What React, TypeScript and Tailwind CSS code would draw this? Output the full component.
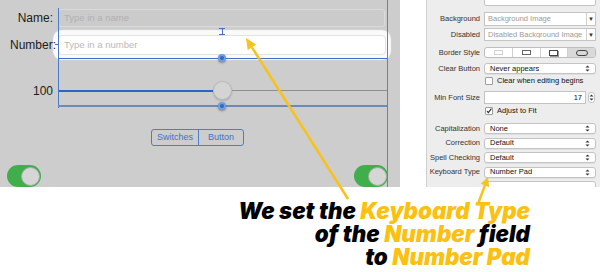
import React from 'react';

const Handle: React.FC<{ className: string }> = ({ className }) => (
  <div
    className={`absolute w-[8px] h-[8px] rounded-full bg-[#2f69c7] border-[2px] border-[#6f9ee0] shadow-[0_1px_2px_rgba(0,0,0,0.35)] ${className}`}
  />
);

const Switch: React.FC = () => (
  <div className="w-[34px] h-[22px] rounded-full bg-[#3fae4b] flex items-center justify-end pr-[1px]">
    <div className="w-[19px] h-[19px] rounded-full bg-[#d6d6d6] border border-[#a9a9a9]" />
  </div>
);

const Canvas: React.FC = () => (
  <div className="relative w-[400px] h-[187px] bg-[#cdcdcd] overflow-hidden flex flex-col pt-[9px] text-[#1b1b1b]">
    {/* Name */}
    <div className="flex items-center h-[18px]">
      <span className="w-[53px] text-right text-[12px] leading-none">Name:</span>
      <div className="ml-[5px] w-[327px] h-[18px] rounded-[3px] border border-[#dbdbdb] bg-[#cbcbcb] flex items-center px-[5px] text-[9.5px] text-[#b1b1b1]">
        Type in a name
      </div>
    </div>

    {/* Number */}
    <div className="mt-[8px] flex items-center h-[20px]">
      <span className="relative z-10 w-[56px] text-right text-[12px] leading-none">Number:</span>
      <div className="ml-[2px] w-[328px] h-[20px] rounded-[4px] bg-white border border-[#e2e2e2] shadow-[0_0_1px_5px_#fafafa] flex items-center px-[5px] text-[9.5px] text-[#b9b9b9]">
        Type in a number
      </div>
    </div>

    {/* Slider */}
    <div className="mt-[26px] flex items-center h-[19px]">
      <span className="w-[53px] text-right text-[12px] leading-none">100</span>
      <div className="ml-[5px] w-[329px] flex items-center">
        <div className="w-[155px] h-[2px] bg-[#2a64c7]" />
        <div className="w-[19px] h-[19px] rounded-full bg-[#d4d4d4] border border-[#bcbcbc] shadow-[0_1px_2px_rgba(0,0,0,0.2)]" />
        <div className="flex-1 h-[1px] bg-[#8f8f8f]" />
      </div>
    </div>

    {/* Segmented */}
    <div className="mt-[29px] ml-[151px] w-[93px] h-[19px] flex rounded-[3px] border border-[#4a7ed0] text-[9px] text-[#3a73c9]">
      <div className="w-[47px] flex items-center justify-center border-r border-[#4a7ed0]">Switches</div>
      <div className="flex-1 flex items-center justify-center">Button</div>
    </div>

    {/* Switches */}
    <div className="mt-[19px] flex pl-[7px] pr-[12px]">
      <Switch />
      <div className="ml-auto">
        <Switch />
      </div>
    </div>

    {/* layout guides */}
    <div className="absolute left-[58px] top-[8px] h-[100px] w-px bg-[#4a7ccb]" />
    <div className="absolute left-[387px] top-0 h-[187px] w-px bg-[#5a84c4]" />
    <div className="absolute left-[58px] top-[58px] w-[329px] h-px bg-[#3f72c6]" />
    <div className="absolute left-[58px] top-[105px] w-[329px] h-[2px] bg-[#6c8cb8]" />
    <div className="absolute left-[55px] top-[44px] w-[4px] h-px bg-[#3f72c6]" />
    <Handle className="left-[218px] top-[54px]" />
    <Handle className="left-[218px] top-[102px]" />
    <div className="absolute left-[219px] top-[28px] w-[6px] h-[7px] flex flex-col items-center">
      <div className="w-[6px] h-px bg-[#3f72c6]" />
      <div className="w-px flex-1 bg-[#3f72c6]" />
      <div className="w-[6px] h-px bg-[#3f72c6]" />
    </div>
  </div>
);

const Updown: React.FC = () => (
  <svg width="5" height="7" viewBox="0 0 5 7" className="shrink-0">
    <path d="M2.5 0.5L4.5 2.6H0.5Z M2.5 6.5L4.5 4.4H0.5Z" fill="#333" />
  </svg>
);

const Label: React.FC<{ children?: React.ReactNode }> = ({ children }) => (
  <span className="w-[55px] shrink-0 text-right pr-[2px] text-[#333] whitespace-nowrap">{children}</span>
);

const Popup: React.FC<{ value: string; h?: string }> = ({ value, h = 'h-[11px]' }) => (
  <div
    className={`ml-[2px] w-[112px] ${h} rounded-[3px] bg-white border border-[#c4c4c4] shadow-[0_1px_0_rgba(0,0,0,0.06)] flex items-center justify-between px-[5px] text-[#111]`}
  >
    <span>{value}</span>
    <Updown />
  </div>
);

const TextPopup: React.FC<{ value: string; h: string }> = ({ value, h }) => (
  <div className={`ml-[2px] w-[112px] ${h} bg-white border border-[#c4c4c4] flex items-center text-[#9a9a9a]`}>
    <span className="flex-1 pl-[3px] overflow-hidden whitespace-nowrap">{value}</span>
    <span className="w-[9px] h-full border-l border-[#d0d0d0] flex items-center justify-center text-[#333] text-[6px]">▼</span>
  </div>
);

const Check: React.FC<{ checked?: boolean; text: string }> = ({ checked, text }) => (
  <div className="flex items-center h-[10px]">
    <Label />
    <div className="ml-[3px] w-[8px] h-[8px] rounded-[1px] bg-white border border-[#9d9d9d] flex items-center justify-center">
      {checked && (
        <svg width="8" height="8" viewBox="0 0 8 8">
          <path d="M1.3 4.2L3.1 6.2L7.2 0.8" stroke="#222" strokeWidth="1.4" fill="none" />
        </svg>
      )}
    </div>
    <span className="ml-[4px] text-[#111]">{text}</span>
  </div>
);

const Sep: React.FC<{ className: string }> = ({ className }) => <div className={`h-px bg-[#d3d3d3] ${className}`} />;

const Inspector: React.FC = () => (
  <div className="w-[174px] h-[187px] bg-[#ededed] border-l border-[#cfcfcf] flex flex-col text-[7.5px] leading-none overflow-hidden">
    <div className="-mt-[8px] flex items-center h-[14px]">
      <Label />
      <div className="ml-[2px] w-[112px] h-[14px] bg-white border border-[#c4c4c4] rounded-[2px]" />
    </div>
    <div className="mt-[6px] flex items-center">
      <Label>Background</Label>
      <TextPopup value="Background Image" h="h-[14px]" />
    </div>
    <div className="mt-[2px] flex items-center">
      <Label>Disabled</Label>
      <TextPopup value="Disabled Background Image" h="h-[13px]" />
    </div>
    <Sep className="mt-[3px]" />
    <div className="mt-[3px] flex items-center">
      <Label>Border Style</Label>
      <div className="ml-[2px] w-[112px] h-[11px] flex rounded-[3px] border border-[#bdbdbd] bg-white overflow-hidden">
        <div className="flex-1 flex items-center justify-center border-r border-[#cfcfcf]">
          <div className="w-[9px] h-[5px] border border-[#cfcfcf]" />
        </div>
        <div className="flex-1 flex items-center justify-center border-r border-[#cfcfcf]">
          <div className="w-[9px] h-[5px] border border-[#666]" />
        </div>
        <div className="flex-1 flex items-center justify-center border-r border-[#cfcfcf]">
          <div className="w-[9px] h-[6px] border border-[#444] shadow-[1px_1px_0_#999]" />
        </div>
        <div className="flex-1 flex items-center justify-center bg-[#d9d9d9]">
          <div className="w-[12px] h-[6px] rounded-[3px] border border-[#444]" />
        </div>
      </div>
    </div>
    <Sep className="mt-[3px]" />
    <div className="mt-[2px] flex items-center">
      <Label>Clear Button</Label>
      <Popup value="Never appears" />
    </div>
    <div className="mt-[2px]">
      <Check text="Clear when editing begins" />
    </div>
    <Sep className="mt-[4px]" />
    <div className="mt-[1px] flex items-center">
      <Label>Min Font Size</Label>
      <div className="ml-[2px] w-[102px] h-[13px] bg-white border border-[#c4c4c4] flex items-center justify-end pr-[3px] text-[#111]">17</div>
      <div className="ml-[2px] w-[7px] h-[11px] rounded-[3px] bg-white border border-[#c4c4c4] flex items-center justify-center">
        <Updown />
      </div>
    </div>
    <div className="mt-[2px]">
      <Check checked text="Adjust to Fit" />
    </div>
    <Sep className="mt-[4px]" />
    <div className="mt-[3px] flex items-center">
      <Label>Capitalization</Label>
      <Popup value="None" />
    </div>
    <div className="mt-[3.5px] flex items-center">
      <Label>Correction</Label>
      <Popup value="Default" />
    </div>
    <div className="mt-[3.5px] flex items-center">
      <Label>Spell Checking</Label>
      <Popup value="Default" />
    </div>
    <div className="mt-[3.5px] flex items-center">
      <Label>Keyboard Type</Label>
      <Popup value="Number Pad" />
    </div>
    <div className="mt-[3px] flex items-center">
      <Label />
      <div className="ml-[2px] w-[112px] h-[11px] bg-white border border-[#c4c4c4] rounded-[3px]" />
    </div>
  </div>
);

export default function App() {
  return (
    <div className="relative w-[600px] h-[272px] bg-white overflow-hidden font-['Liberation_Sans',Arial,sans-serif]">
      <div className="flex h-[187px]">
        <Canvas />
        <div className="w-[26px]" />
        <Inspector />
      </div>

      <div className="pt-[12px] pr-[70px] text-right font-['Inter',sans-serif] font-black italic text-[22.3px] leading-[23px] text-black">
        <div>
          We set the <span className="text-[#fcc010]">Keyboard Type</span>
        </div>
        <div>
          of the <span className="text-[#fcc010]">Number</span> field
        </div>
        <div>
          to <span className="text-[#fcc010]">Number Pad</span>
        </div>
      </div>

      <svg className="absolute inset-0 pointer-events-none" width="600" height="272" viewBox="0 0 600 272">
        <line x1="348" y1="199" x2="251.9" y2="47.3" stroke="#f8c21a" strokeWidth="2.5" />
        <polygon points="246,38 256.1,44.6 247.7,50" fill="#f8c21a" />
        <line x1="478" y1="204" x2="484.9" y2="185.4" stroke="#f8c21a" strokeWidth="2.5" />
        <polygon points="488,177 489.1,187 480.7,183.8" fill="#f8c21a" />
      </svg>
    </div>
  );
}
